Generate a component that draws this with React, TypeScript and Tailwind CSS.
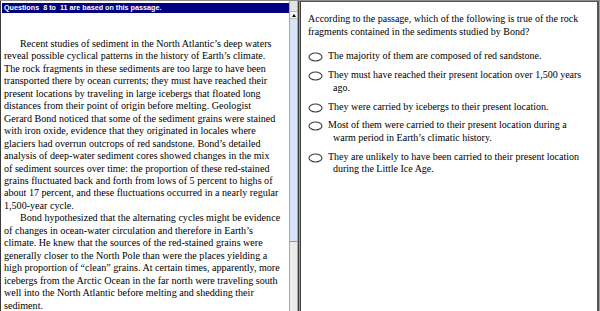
const passage: string[][] = [
  [
    "Recent studies of sediment in the North Atlantic’s deep waters",
    "reveal possible cyclical patterns in the history of Earth’s climate.",
    "The rock fragments in these sediments are too large to have been",
    "transported there by ocean currents; they must have reached their",
    "present locations by traveling in large icebergs that floated long",
    "distances from their point of origin before melting. Geologist",
    "Gerard Bond noticed that some of the sediment grains were stained",
    "with iron oxide, evidence that they originated in locales where",
    "glaciers had overrun outcrops of red sandstone. Bond’s detailed",
    "analysis of deep-water sediment cores showed changes in the mix",
    "of sediment sources over time: the proportion of these red-stained",
    "grains fluctuated back and forth from lows of 5 percent to highs of",
    "about 17 percent, and these fluctuations occurred in a nearly regular",
    "1,500-year cycle.",
  ],
  [
    "Bond hypothesized that the alternating cycles might be evidence",
    "of changes in ocean-water circulation and therefore in Earth’s",
    "climate. He knew that the sources of the red-stained grains were",
    "generally closer to the North Pole than were the places yielding a",
    "high proportion of “clean” grains. At certain times, apparently, more",
    "icebergs from the Arctic Ocean in the far north were traveling south",
    "well into the North Atlantic before melting and shedding their",
    "sediment.",
  ],
];

const options: string[][] = [
  ["The majority of them are composed of red sandstone."],
  ["They must have reached their present location over 1,500 years", "ago."],
  ["They were carried by icebergs to their present location."],
  ["Most of them were carried to their present location during a", "warm period in Earth’s climatic history."],
  ["They are unlikely to have been carried to their present location", "during the Little Ice Age."],
];

function Radio() {
  return (
    <svg width="15" height="10" viewBox="0 0 15 10" className="shrink-0 mt-[2px]">
      <ellipse cx="7.5" cy="5" rx="6.5" ry="4" fill="#fff" stroke="#3c3c3c" strokeWidth="1.1" />
    </svg>
  );
}

export default function App() {
  return (
    <div className="w-[600px] h-[311px] flex bg-white overflow-hidden border-t border-[#8c8c8c]">
      {/* passage pane */}
      <div className="w-[289px] h-full border-l border-[#3a3a3a] flex flex-col overflow-hidden">
        <div className="mt-[2px] ml-[1px] h-[10px] bg-[#000080] text-white font-bold text-[7.2px] leading-[10px] pl-[2px] whitespace-pre font-['Liberation_Sans',sans-serif]">
          {"Questions  8 to  11 are based on this passage."}
        </div>
        <div className="pt-[25px] pl-[3px] text-[10.1px] leading-[12.45px] text-black font-['Liberation_Serif',serif] whitespace-nowrap">
          {passage.map((para, i) => (
            <div key={i}>
              {para.map((line, j) => (
                <div key={j} className={j === 0 ? "pl-[16px]" : ""}>{line}</div>
              ))}
            </div>
          ))}
        </div>
      </div>

      {/* scrollbar */}
      <div className="w-[9px] h-full flex flex-col bg-[#ececec] border-x border-[#9aaac0]">
        <div className="h-[10px] bg-[#e4e4e4]" />
        <div className="h-[8px] bg-[#f4f4f4] border-y border-[#b8b8b8] flex items-center justify-center">
          <div className="w-0 h-0 border-x-[2.5px] border-x-transparent border-b-[3px] border-b-black" />
        </div>
        <div className="h-[223px] bg-[#d6e4f7] border-b border-[#7d96bd]" />
        <div className="flex-1 bg-[#ececec]" />
      </div>

      {/* divider */}
      <div className="w-[3px] h-full bg-[#9a9a9a] border-x border-[#3a3a3a]" />

      {/* question pane */}
      <div className="flex-1 h-full border-r border-[#a0a0a0]">
        <div className="h-full border-t border-r-2 border-[#555] pt-[10px] pl-[7px] text-[10px] leading-[13.2px] text-black font-['Liberation_Serif',serif] whitespace-nowrap">
          <div>According to the passage, which of the following is true of the rock</div>
          <div>fragments contained in the sediments studied by Bond?</div>
          <div className="mt-[12px] flex flex-col gap-[6px]">
            {options.map((opt, i) => (
              <div key={i} className="flex">
                <Radio />
                <div className="ml-[5px] leading-[12.7px]">
                  {opt.map((line, j) => (
                    <div key={j} className={j > 0 ? "pl-[5px]" : ""}>{line}</div>
                  ))}
                </div>
              </div>
            ))}
          </div>
        </div>
      </div>
    </div>
  );
}
